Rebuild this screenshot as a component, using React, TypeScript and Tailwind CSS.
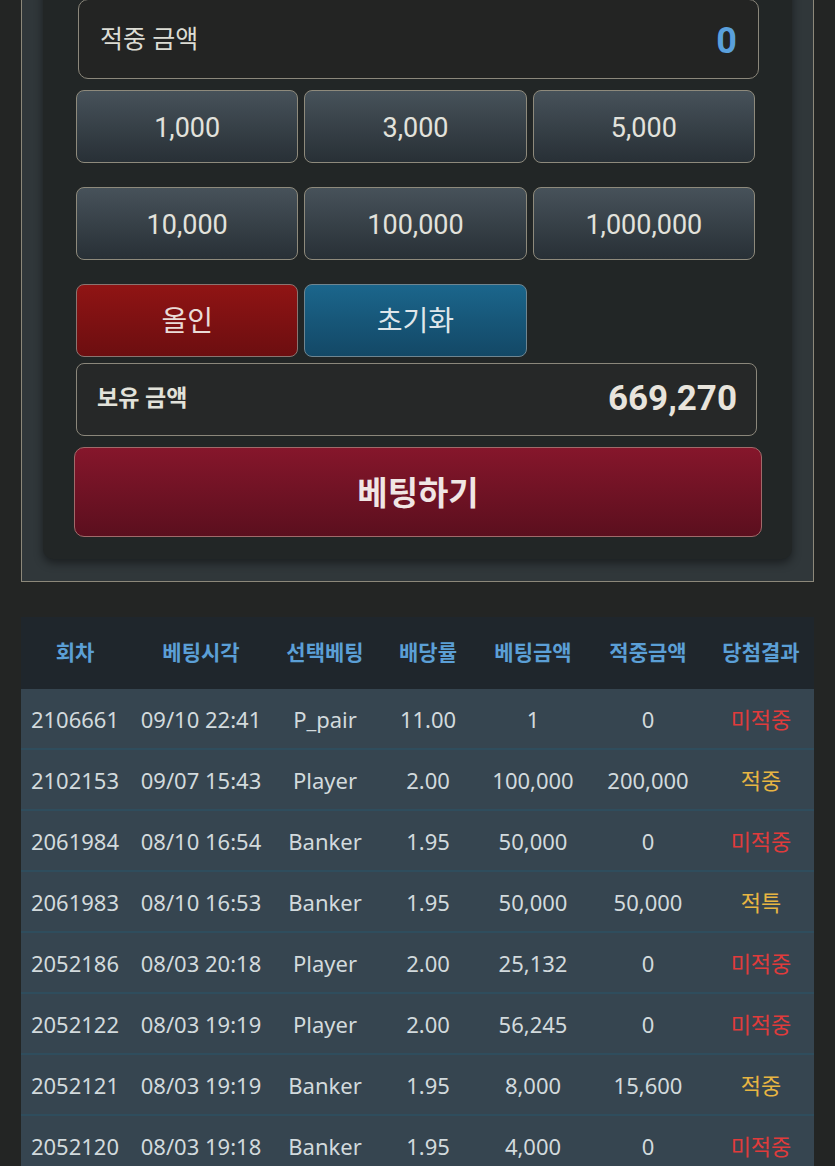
const font = { fontFamily: '"Noto Sans", "Noto Sans CJK KR", sans-serif' };
const topFont = { fontFamily: 'Roboto, "Noto Sans CJK KR", sans-serif' };

const amounts = ["1,000", "3,000", "5,000", "10,000", "100,000", "1,000,000"];

type Row = {
  round: string;
  time: string;
  pick: string;
  odds: string;
  bet: string;
  win: string;
  result: string;
};

const rows: Row[] = [
  { round: "2106661", time: "09/10 22:41", pick: "P_pair", odds: "11.00", bet: "1", win: "0", result: "미적중" },
  { round: "2102153", time: "09/07 15:43", pick: "Player", odds: "2.00", bet: "100,000", win: "200,000", result: "적중" },
  { round: "2061984", time: "08/10 16:54", pick: "Banker", odds: "1.95", bet: "50,000", win: "0", result: "미적중" },
  { round: "2061983", time: "08/10 16:53", pick: "Banker", odds: "1.95", bet: "50,000", win: "50,000", result: "적특" },
  { round: "2052186", time: "08/03 20:18", pick: "Player", odds: "2.00", bet: "25,132", win: "0", result: "미적중" },
  { round: "2052122", time: "08/03 19:19", pick: "Player", odds: "2.00", bet: "56,245", win: "0", result: "미적중" },
  { round: "2052121", time: "08/03 19:19", pick: "Banker", odds: "1.95", bet: "8,000", win: "15,600", result: "적중" },
  { round: "2052120", time: "08/03 19:18", pick: "Banker", odds: "1.95", bet: "4,000", win: "0", result: "미적중" },
];

const headers = ["회차", "베팅시각", "선택베팅", "배당률", "베팅금액", "적중금액", "당첨결과"];

const cols = "grid grid-cols-[108px_144px_104px_102px_108px_122px_104px]";

function AmountButton({ label }: { label: string }) {
  return (
    <button className="h-[73px] rounded-[8px] border-[1.5px] border-[#8e8a7c] bg-gradient-to-b from-[#47525a] to-[#283036] pt-[3px] text-[27px] text-[#e2e2dc]">
      {label}
    </button>
  );
}

export default function App() {
  return (
    <div className="min-h-[1166px] overflow-hidden bg-[#232524]" style={font}>
      <div className="mx-[21px] -mt-[30px] border border-[#8c887a] bg-[#30373a] px-[21px] pb-[22px]" style={topFont}>
        <div className="rounded-b-[10px] bg-[#222626] px-[32px] pb-[22px] pt-[28px] shadow-[0_4px_10px_rgba(0,0,0,0.45)]">
          <div className="ml-[3px] mr-[1px] flex h-[80px] items-center justify-between rounded-[10px] border-[1.5px] border-[#8b877b] bg-[#232423] pl-[21px] pr-[21px] pt-[3px]">
            <span className="-mt-[2px] text-[25px] text-[#dcdcd4]">적중 금액</span>
            <span className="text-[36px] font-bold text-[#5aa0dc]">0</span>
          </div>

          <div className="mt-[11px] grid grid-cols-3 gap-x-[6px] gap-y-[24px] pl-[1px] pr-[5px]">
            {amounts.map((a) => (
              <AmountButton key={a} label={a} />
            ))}
            <button className="h-[73px] rounded-[8px] border-[1.5px] border-[#8a7470] bg-gradient-to-b from-[#901414] to-[#6c0e10] pt-[2px] text-[28px] text-[#eadcd8]">
              올인
            </button>
            <button className="h-[73px] rounded-[8px] border-[1.5px] border-[#6f8590] bg-gradient-to-b from-[#1b668c] to-[#134866] pt-[2px] text-[28px] text-[#dfe6ea]">
              초기화
            </button>
          </div>

          <div className="ml-[1px] mr-[3px] mt-[6px] flex h-[73px] items-center justify-between rounded-[8px] border-[1.5px] border-[#8b877b] bg-[#262828] pl-[20px] pr-[19px]">
            <span className="text-[23px] font-bold text-[#e2e2da]">보유 금액</span>
            <span className="text-[35px] font-bold text-[#e8e4dc]">669,270</span>
          </div>

          <button className="-ml-[1px] mt-[11px] flex h-[90px] w-[calc(100%+3px)] items-center justify-center rounded-[10px] border-[1.5px] border-[#a06a6a] bg-gradient-to-b from-[#86162b] to-[#5b0f1e] pt-[3px] text-[33px] font-bold text-[#f0e6e4]">
            베팅하기
          </button>
        </div>
      </div>

      <div className="mx-[21px] mt-[35px]">
        <div className={`${cols} h-[72px] items-center bg-[#1f262c]`}>
          {headers.map((h) => (
            <div key={h} className="text-center text-[21px] font-bold text-[#5b9fd6]">
              {h}
            </div>
          ))}
        </div>
        {rows.map((r) => (
          <div
            key={r.round}
            className={`${cols} h-[61px] items-center border-b-2 border-[#2f4d5d] bg-[#364550] pt-[2px] text-[22px] text-[#d2dadd]`}
          >
            <div className="text-center">{r.round}</div>
            <div className="text-center">{r.time}</div>
            <div className="text-center">{r.pick}</div>
            <div className="text-center">{r.odds}</div>
            <div className="text-center">{r.bet}</div>
            <div className="text-center">{r.win}</div>
            <div
              className={`text-center ${r.result === "미적중" ? "text-[#e03b3b]" : "text-[#e8b542]"}`}
            >
              {r.result}
            </div>
          </div>
        ))}
      </div>
    </div>
  );
}
